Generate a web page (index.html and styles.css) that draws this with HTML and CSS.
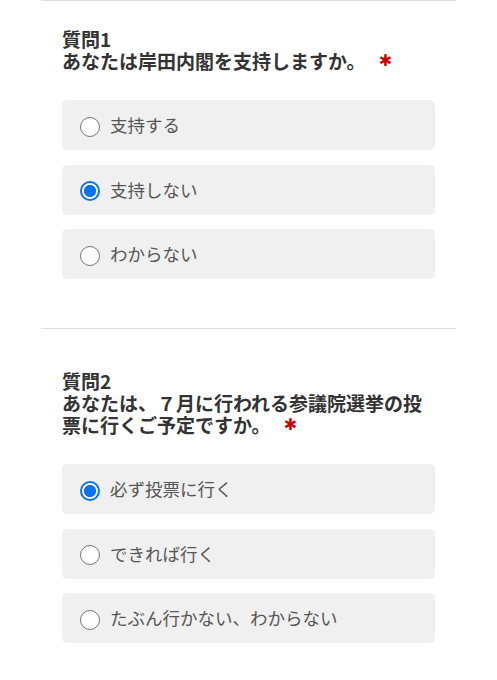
FILE: index.html
```html
<!DOCTYPE html>
<html lang="ja">
<head>
<meta charset="utf-8">
<title>アンケート</title>
<link rel="stylesheet" href="styles.css">
</head>
<body>
<main class="form">
  <section class="q">
    <h2 class="q-title">質問1<br>あなたは岸田内閣を支持しますか。<span class="req">✱</span></h2>
    <div class="options">
      <label class="option"><span class="radio"></span><span class="opt-text">支持する</span></label>
      <label class="option"><span class="radio checked"></span><span class="opt-text">支持しない</span></label>
      <label class="option"><span class="radio"></span><span class="opt-text">わからない</span></label>
    </div>
  </section>
  <section class="q">
    <h2 class="q-title">質問2<br>あなたは、７月に行われる参議院選挙の投票に行くご予定ですか。<span class="req">✱</span></h2>
    <div class="options">
      <label class="option"><span class="radio checked"></span><span class="opt-text">必ず投票に行く</span></label>
      <label class="option"><span class="radio"></span><span class="opt-text">できれば行く</span></label>
      <label class="option"><span class="radio"></span><span class="opt-text">たぶん行かない、わからない</span></label>
    </div>
  </section>
</main>
</body>
</html>
```
FILE: styles.css
```css
html, body {
  margin: 0;
  padding: 0;
  background: #ffffff;
}

body {
  font-family: "Noto Sans CJK JP", "Noto Sans", sans-serif;
}

.form {
  padding: 0 41px;
}

.q {
  border-top: 1px solid #dedede;
  padding: 41px 21px 49px;
}

.q:first-child {
  padding-top: 27px;
}

.q-title {
  margin: 0 0 28px;
  font-size: 19px;
  line-height: 22px;
  font-weight: 700;
  color: #333333;
}

.req {
  display: inline-block;
  margin-left: 13px;
  color: #cc0000;
  font-family: "DejaVu Sans", sans-serif;
  font-size: 16px;
  line-height: 22px;
  vertical-align: top;
}

.options {
  display: flex;
  flex-direction: column;
  gap: 14.5px;
}

.option {
  display: flex;
  align-items: center;
  gap: 10px;
  height: 50px;
  padding: 0 18px;
  background: #f0f0f0;
  border-radius: 5px;
  box-sizing: border-box;
}

.radio {
  flex: none;
  width: 20px;
  height: 20px;
  box-sizing: border-box;
  border: 1.5px solid #767676;
  border-radius: 50%;
  background: #ffffff;
  margin-top: 3px;
}

.radio.checked {
  border: 2px solid #0b72f0;
  background: radial-gradient(circle, #0b72f0 0 5.8px, #ffffff 6.3px);
}

.opt-text {
  font-size: 17.5px;
  line-height: 22px;
  color: #555555;
}
```
